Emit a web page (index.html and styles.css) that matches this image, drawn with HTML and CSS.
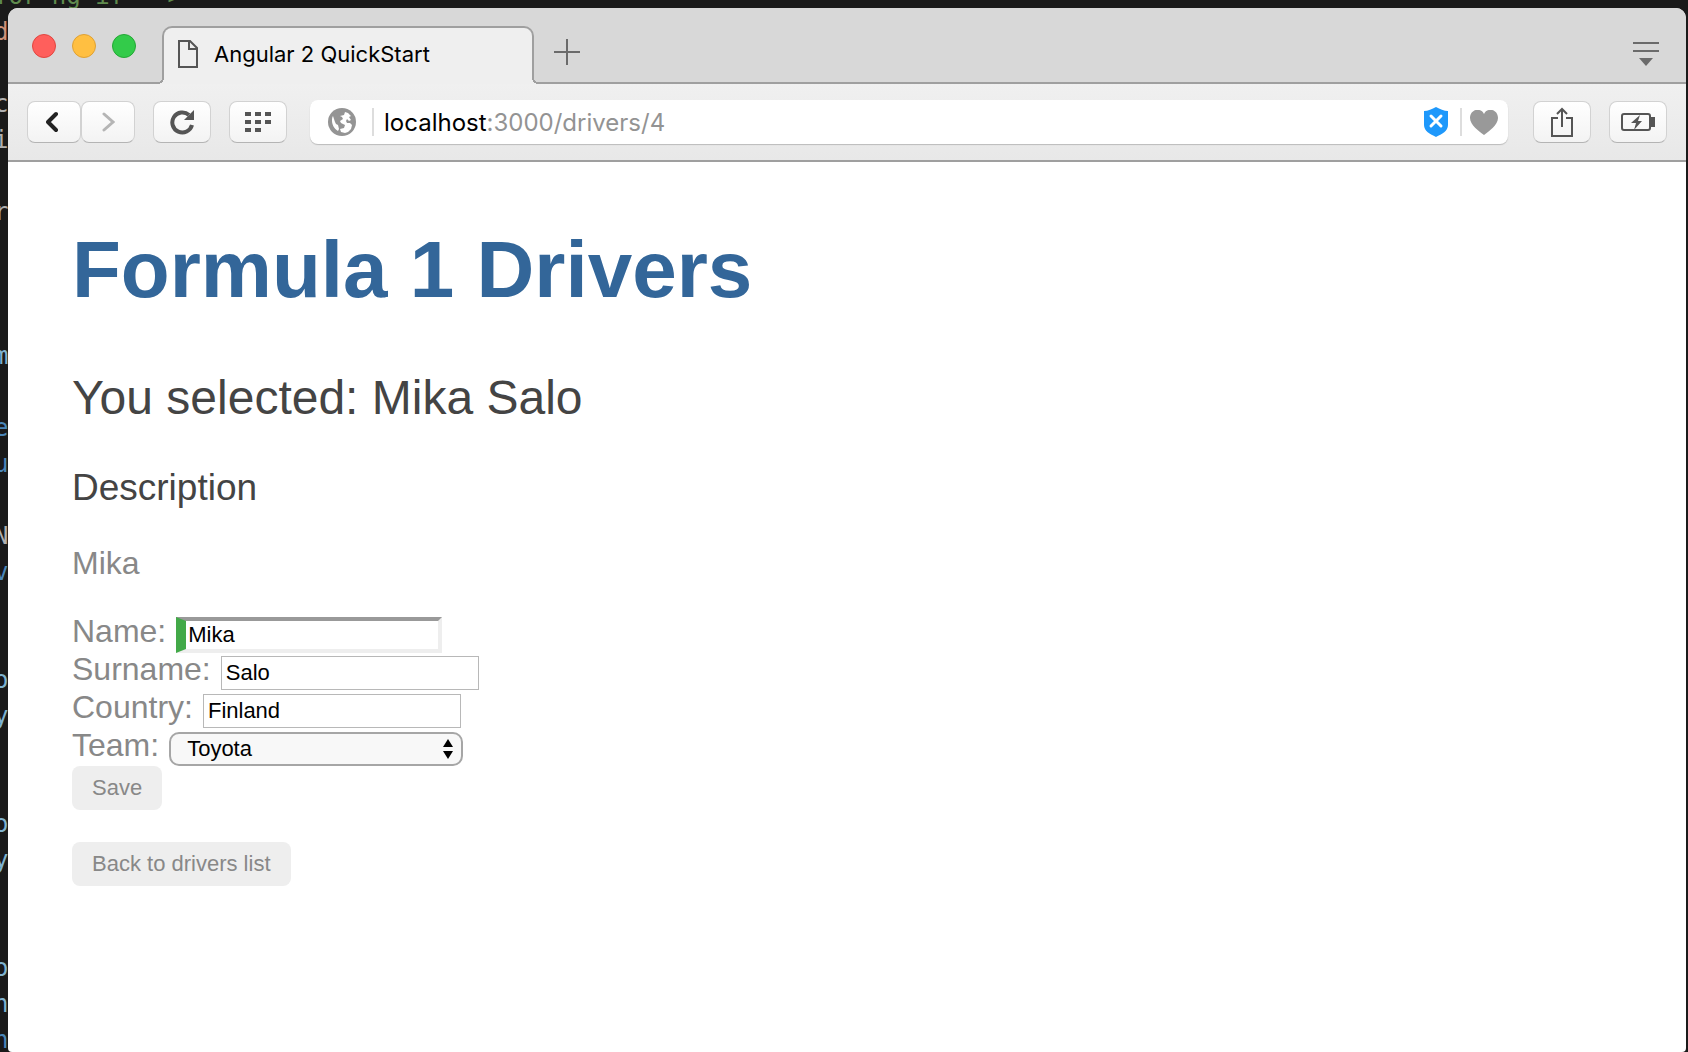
FILE: index.html
```html
<!DOCTYPE html>
<html lang="en">
<head>
<meta charset="utf-8">
<title>Angular 2 QuickStart</title>
<link rel="stylesheet" href="styles.css">
</head>
<body>
<pre class="editor" aria-hidden="true"><span class="comment">for ng-if --&gt;</span>
<span class="string">d</span>

c
i

r



<span class="attr">m</span>

<span class="keyword">e</span>
<span class="keyword">u</span>

N
<span class="keyword">v</span>


<span class="attr">o</span>
<span class="attr">y</span>


<span class="attr">o</span>
<span class="attr">y</span>


<span class="attr">o</span>
<span class="attr">n</span>
<span class="keyword">n</span></pre>
<div class="window">
  <header class="tabstrip">
    <div class="lights">
      <button class="light close" aria-label="Close"></button>
      <button class="light minimise" aria-label="Minimise"></button>
      <button class="light zoom" aria-label="Zoom"></button>
    </div>
    <div class="tab">
      <svg class="page-icon" width="20" height="28" viewBox="0 0 20 28" fill="none" stroke="#555" stroke-width="2"><path d="M1 1h11l7 7v19H1zM11 1v8h8"/></svg>
      <span>Angular 2 QuickStart</span>
    </div>
    <button class="plain new-tab" aria-label="New tab"><svg width="26" height="26" viewBox="0 0 26 26" stroke="#6b6b6b" stroke-width="2"><path d="M13 0v26M0 13h26"/></svg></button>
    <button class="plain tab-menu" aria-label="Tab menu"><svg width="26" height="24" viewBox="0 0 26 24"><path d="M0 0h26v2H0zM0 8h26v2H0zM6 16h14l-7 8z" fill="#6b6b6b"/></svg></button>
  </header>
  <nav class="toolbar">
    <div class="history">
      <button class="tool" aria-label="Back"><svg width="16" height="22" viewBox="0 0 16 22" fill="none" stroke="#222" stroke-width="4" stroke-linecap="round" stroke-linejoin="round"><path d="M10 3L2 11l8 8"/></svg></button>
      <button class="tool" aria-label="Forward"><svg width="14" height="22" viewBox="0 0 14 22" fill="none" stroke="#b5b5b5" stroke-width="3" stroke-linecap="round"><path d="M3 3l9 8-9 8"/></svg></button>
    </div>
    <button class="tool" aria-label="Reload"><svg width="26" height="26" viewBox="0 0 26 26"><path d="M23 16A10 10 0 1 1 20 6" fill="none" stroke="#555" stroke-width="4"/><path d="M25 1v10H15z" fill="#555"/></svg></button>
    <button class="tool" aria-label="Speed dial"><svg width="26" height="20" viewBox="0 0 26 20" fill="#555"><path d="M0 0h6v4H0zM10 0h6v4h-6zM20 0h6v4h-6zM0 8h6v4H0zM10 8h6v4h-6zM20 8h6v4h-6zM0 16h6v4H0zM10 16h6v4h-6z"/></svg></button>
    <div class="address">
      <svg width="28" height="28" viewBox="0 0 28 28"><circle cx="14" cy="14" r="14" fill="#949494"/><path d="M5 8l2 6 1 2 2 1 1 4-1 2c-4-2-6-7-6-10 0-2 0-4 1-5zM12 8l4-1 1-3 3 1 3 3-2 1 2 3-2 1-2-2-1 2 1 2 3 0 2 2-1 4-3 3-3 1-4-1-1-3 4-1 1-3-4-2-1-2 3-2-1-2z" fill="#fff"/></svg>
      <span class="rule"></span>
      <a class="url" href="#"><b>localhost</b>:3000/drivers/4</a>
      <svg width="24" height="30" viewBox="0 0 24 30"><path d="M12 0c4 2 8 4 12 4v14c0 6-6 9-12 12C6 27 0 24 0 18V4c4 0 8-2 12-4z" fill="#1e98fb"/><path d="M7 9l10 10M17 9L7 19" stroke="#fff" stroke-width="3" stroke-linecap="round"/></svg>
      <span class="rule"></span>
      <svg width="28" height="25" viewBox="0 0 28 25"><path d="M14 25C9 21 0 15 0 8c0-9 11-11 14-4 3-7 14-5 14 4 0 7-9 13-14 17z" fill="#999"/></svg>
    </div>
    <button class="tool" aria-label="Share"><svg width="22" height="30" viewBox="0 0 22 30" fill="none" stroke="#555" stroke-width="2"><path d="M7 11H1v18h20V11h-6M11 20V2M6 7l5-5 5 5"/></svg></button>
    <button class="tool" aria-label="Battery saver"><svg width="34" height="18" viewBox="0 0 34 18"><rect x="1" y="1" width="28" height="16" rx="2" fill="none" stroke="#555" stroke-width="2"/><path d="M30 4h4v10h-4zM19 2l-9 8h5l-2 7 8-9h-4z" fill="#555"/></svg></button>
  </nav>
  <main class="page">
    <h1>Formula 1 Drivers</h1>
    <h2>You selected: Mika Salo</h2>
    <h3>Description</h3>
    <p>Mika</p>
    <form>
      <div class="field"><label for="name">Name:</label><input class="valid" id="name" value="Mika"></div>
      <div class="field"><label for="surname">Surname:</label><input id="surname" value="Salo"></div>
      <div class="field"><label for="country">Country:</label><input id="country" value="Finland"></div>
      <div class="field"><label for="team">Team:</label><span class="select"><select id="team"><option>Toyota</option></select><svg width="10" height="20" viewBox="0 0 10 20"><path d="M5 0l5 8H0zM5 20l5-8H0z"/></svg></span></div>
      <button class="action" type="button">Save</button>
    </form>
    <button class="action" type="button">Back to drivers list</button>
  </main>
</div>
</body>
</html>
```
FILE: styles.css
```css
* { box-sizing: border-box; }
body {
  margin: 0;
  min-height: 100vh;
  display: flex;
  padding: 8px 2px 0 8px;
  background: #1a1a1a;
  font-family: "Liberation Sans", Arial, sans-serif;
  overflow: hidden;
}
button { margin: 0; font-family: inherit; }
svg { display: block; flex: none; }

/* Code editor behind the browser window */
.editor {
  position: absolute;
  top: -22px;
  left: -6px;
  margin: 0;
  font: 24px/36px "DejaVu Sans Mono", monospace;
  color: #b0b0b0;
}
.comment { color: #608b4e; }
.string { color: #ce9178; }
.attr { color: #7fb2cf; }
.keyword { color: #4a86b8; }

.window {
  position: relative;
  flex: 1;
  min-width: 0;
  display: flex;
  flex-direction: column;
  background: #fff;
  border-radius: 10px 10px 4px 4px;
  overflow: hidden;
}

.tabstrip {
  display: flex;
  height: 76px;
  background: #d8d8d8;
  box-shadow: inset 0 -2px #9f9f9f;
}
.lights { display: flex; gap: 16px; padding: 26px 26px 0 24px; }
.light { width: 24px; height: 24px; padding: 0; border: 1px solid; border-radius: 50%; }
.close { background: #ff5f5c; border-color: #e14640; }
.minimise { background: #ffbf41; border-color: #dfa134; }
.zoom { background: #33cb4a; border-color: #24a835; }
.tab {
  position: relative;
  display: flex;
  align-items: center;
  gap: 16px;
  width: 372px;
  margin-top: 18px;
  padding: 0 14px 4px;
  border: 2px solid #9f9f9f;
  border-bottom: 0;
  border-radius: 10px 10px 0 0;
  background: #efefef;
  font: 22px/28px Inter, sans-serif;
}
/* Rounded feet where the tab meets the strip's bottom edge */
.tab::before, .tab::after {
  content: "";
  position: absolute;
  bottom: 0;
  width: 6px;
  height: 6px;
}
.tab::before {
  left: -6px;
  background: radial-gradient(circle at 0 0, #d8d8d8 4px, #9f9f9f 4px 6px, #efefef 6px);
}
.tab::after {
  right: -6px;
  background: radial-gradient(circle at 100% 0, #d8d8d8 4px, #9f9f9f 4px 6px, #efefef 6px);
}
.plain { align-self: flex-start; padding: 0; border: 0; background: none; }
.new-tab { margin: 31px 20px 0; }
.tab-menu { margin: 34px 27px 0 auto; }

.toolbar {
  display: flex;
  align-items: center;
  gap: 18px;
  height: 78px;
  padding: 0 19px;
  background: linear-gradient(#f0f0f0, #e8e8e8);
  border-bottom: 2px solid #9f9f9f;
}
.history { display: flex; }
.tool {
  display: flex;
  align-items: center;
  justify-content: center;
  width: 58px;
  height: 42px;
  padding: 0;
  border: 1px solid #d2d2d2;
  border-bottom-color: #b4b4b4;
  border-radius: 8px;
  background: linear-gradient(#fff, #f3f3f3);
}
.history .tool { width: 54px; }
.address {
  flex: 1;
  display: flex;
  align-items: center;
  height: 44px;
  margin: 0 7px 0 5px;
  padding: 0 10px 0 18px;
  border-radius: 8px;
  background: #fff;
  box-shadow: 0 1px 1px #bbb;
}
.rule { width: 2px; height: 28px; margin-left: 16px; background: #ddd; }
.address .url + svg + .rule { margin: 0 8px 0 12px; }
.url {
  flex: 1;
  margin-left: 10px;
  padding-top: 2px;
  color: #939393;
  font: 24px/28px Inter, sans-serif;
  text-decoration: none;
}
.url b { font-weight: 400; color: #000; }

.page { padding: 62px 64px; color: #888; font-size: 32px; line-height: 38px; }
h1, h2, h3, p { margin: 0; }
h1 { color: #369; font-size: 80px; line-height: 92px; }
h2 { margin-top: 54px; color: #444; font-size: 48px; font-weight: 400; line-height: 56px; }
h3 { margin-top: 40px; color: #444; font-size: 37px; font-weight: 400; line-height: 44px; }
p { margin-top: 34px; }
form { margin: 30px 0 32px; }
.field { display: flex; align-items: baseline; gap: 10px; height: 38px; }
form .action { margin-top: 2px; }
input, select {
  width: 258px;
  height: 34px;
  padding: 2px 4px;
  border: 1px solid #b8b8b8;
  background: #fff;
  color: #000;
  font: 22px/26px "Liberation Sans", Arial, sans-serif;
}
.valid {
  width: 266px;
  height: 36px;
  padding: 2px;
  border: 4px solid;
  border-color: #999 #eee #eee #42a948;
  border-left-width: 10px;
}
.select { display: inline-grid; align-items: center; }
.select > * { grid-area: 1 / 1; }
.select svg { justify-self: end; margin-right: 10px; }
select {
  width: 294px;
  padding: 0 16px;
  border: 2px solid #a6a6a6;
  border-radius: 10px;
  background: #f8f8f8;
  appearance: none;
}
.action {
  display: block;
  height: 44px;
  padding: 0 20px;
  border: 0;
  border-radius: 8px;
  background: #eee;
  color: #888;
  font-size: 22px;
}
```
